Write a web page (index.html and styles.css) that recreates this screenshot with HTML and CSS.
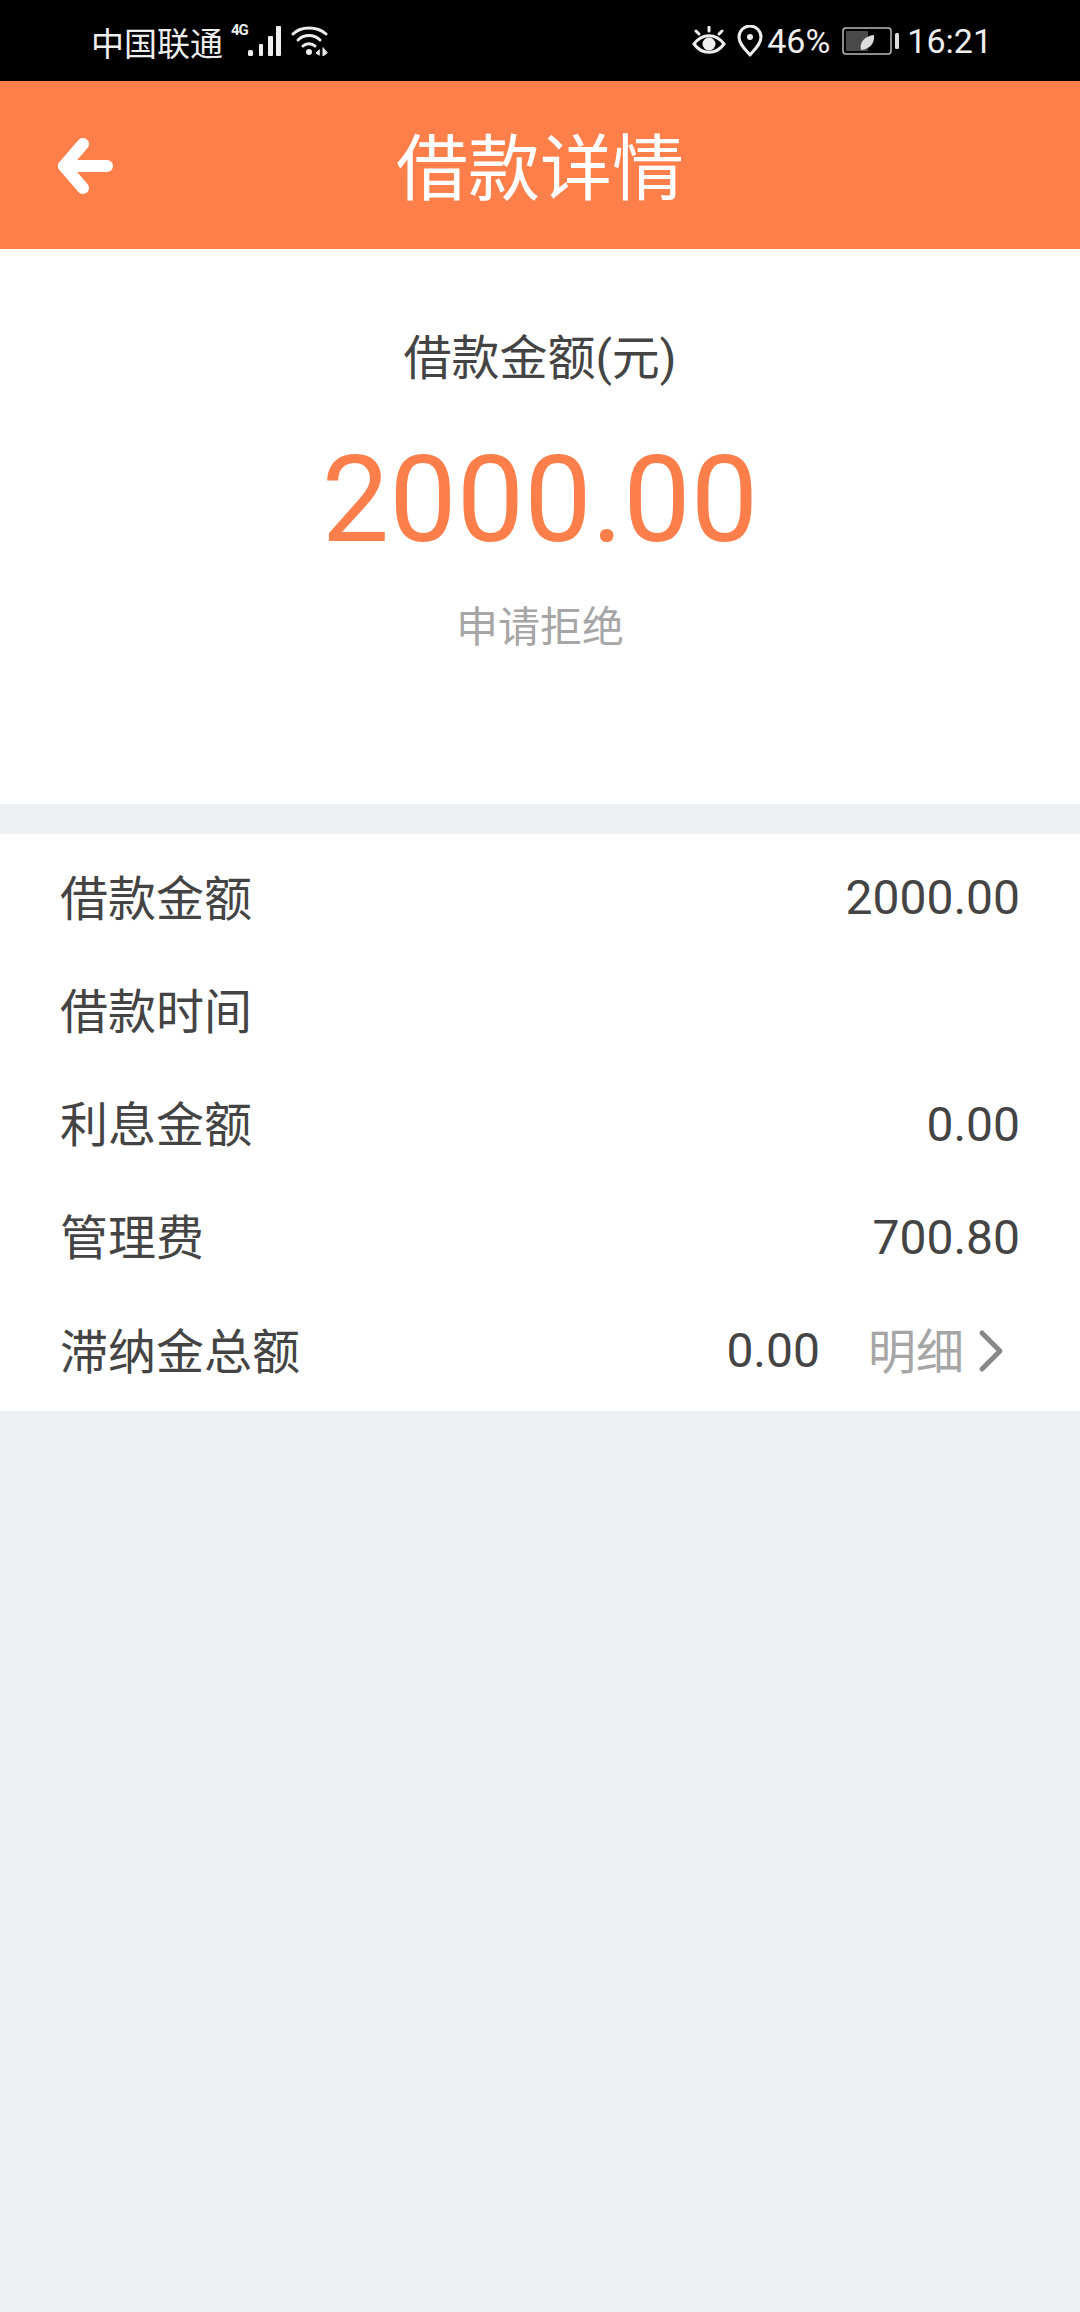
FILE: index.html
```html
<!DOCTYPE html>
<html lang="zh-CN">
<head>
<meta charset="UTF-8">
<meta name="viewport" content="width=device-width, initial-scale=1.0">
<title>借款详情</title>
<link rel="stylesheet" href="styles.css">
</head>
<body>
<div class="status-bar">
    <div class="status-left">
        <span class="carrier">中国联通</span>
        <span class="net">4G</span>
        <svg class="signal" width="34" height="30" viewBox="0 0 34 30">
            <rect x="0" y="24" width="5" height="6" rx="1.5" fill="#eee"/>
            <rect x="11" y="18" width="4" height="12" rx="1" fill="#eee"/>
            <rect x="20" y="10" width="5" height="20" rx="1" fill="#eee"/>
            <rect x="28" y="0" width="5" height="30" rx="1" fill="#eee"/>
        </svg>
        <svg class="wifi" width="38" height="30" viewBox="0 0 38 30" fill="none" stroke="#eee" stroke-width="3" stroke-linecap="round">
            <path d="M2 8C10 0 26 0 35 8"/>
            <path d="M7 14C13 8 23 8 29 14"/>
            <path d="M12 20C15 17 21 17 24 20"/>
            <circle cx="18" cy="26" r="3" fill="#eee" stroke="none"/>
            <path d="M28 24L25 27L28 29Z" fill="#eee" stroke-width="1"/>
            <path d="M32 22V30L36 27Z" fill="#eee" stroke-width="1"/>
        </svg>
    </div>
    <div class="status-right">
        <svg class="eye" width="34" height="30" viewBox="0 0 34 30" fill="none" stroke="#eee" stroke-width="3" stroke-linecap="round">
            <path d="M2 18C10 7 24 7 32 18C24 29 10 29 2 18Z"/>
            <circle cx="17" cy="18" r="6.5" fill="#eee" stroke="none"/>
            <path d="M17 1V5M4 5L7 8M30 5L27 8"/>
        </svg>
        <svg class="pin" width="26" height="32" viewBox="0 0 26 32" fill="none" stroke="#eee" stroke-width="3">
            <path d="M13 30C8 24 2 19 2 12A11 11 0 0 1 24 12C24 19 18 24 13 30Z" stroke-linejoin="round"/>
            <circle cx="13" cy="12" r="3" fill="#eee" stroke="none"/>
        </svg>
        <span class="percent">46%</span>
        <svg class="battery" width="58" height="28" viewBox="0 0 58 28">
            <rect x="1" y="1" width="48" height="26" rx="3" fill="none" stroke="#bbb" stroke-width="1.5"/>
            <rect x="4" y="4" width="22" height="20" rx="1" fill="#4a4a4a"/>
            <path d="M19 23C17 15 23 9 32 8C33 16 28 22 19 23Z" fill="#ddd"/>
            <rect x="53" y="6" width="4" height="16" rx="1.5" fill="#ddd"/>
        </svg>
        <span class="clock">16:21</span>
    </div>
</div>

<div class="header">
    <svg class="back" width="58" height="58" viewBox="0 0 58 58" fill="none" stroke="#fff" stroke-width="12" stroke-linecap="round" stroke-linejoin="round">
        <path d="M27 7L8 29L27 51"/>
        <path d="M8 29H51"/>
    </svg>
    <div class="header-title">借款详情</div>
</div>

<div class="hero">
    <div class="hero-label">借款金额(元)</div>
    <div class="hero-amount">2000.00</div>
    <div class="hero-status">申请拒绝</div>
</div>

<div class="detail-list">
    <div class="row"><span class="label">借款金额</span><span>2000.00</span></div>
    <div class="row"><span class="label">借款时间</span></div>
    <div class="row"><span class="label">利息金额</span><span>0.00</span></div>
    <div class="row"><span class="label">管理费</span><span>700.80</span></div>
    <div class="row">
        <span class="label">滞纳金总额</span>
        <div class="row-right">
            <span>0.00</span>
            <span class="link">明细</span>
            <svg class="chevron" width="28" height="44" viewBox="0 0 28 44" fill="none" stroke="#888" stroke-width="5" stroke-linecap="round" stroke-linejoin="round">
                <path d="M4 4L22 22L4 40"/>
            </svg>
        </div>
    </div>
</div>
</body>
</html>
```

FILE: styles.css
```css
body {
    margin: 0;
    padding: 0;
    height: 2312px;
    overflow: hidden;
    background-color: #edf1f4;
    font-family: Roboto, "Noto Sans CJK SC", sans-serif;
    color: #444;
}
.status-bar {
    height: 81px;
    box-sizing: border-box;
    background-color: #000;
    color: #eee;
    display: flex;
    justify-content: space-between;
    align-items: center;
    padding: 0 88px 0 91px;
}
.status-left,
.status-right {
    display: flex;
    align-items: center;
}
.carrier {
    font-size: 33px;
    margin-top: 2px;
}
.net {
    font-size: 15px;
    font-weight: 700;
    letter-spacing: -1px;
    margin: -22px 0 0 8px;
}
.signal {
    margin: 0 0 0 0;
}
.wifi {
    margin: 0 0 0 9px;
}
.pin {
    margin-left: 11px;
}
.percent {
    font-size: 34px;
    margin-left: 4px;
}
.battery {
    margin-left: 12px;
}
.clock {
    font-size: 34px;
    margin-left: 7px;
}
.header {
    height: 168px;
    box-sizing: border-box;
    padding-bottom: 6px;
    background-color: #ff7f4b;
    position: relative;
    display: flex;
    align-items: center;
    justify-content: center;
}
.back {
    position: absolute;
    left: 56px;
    top: 56px;
}
.header-title {
    color: #fff;
    font-size: 72px;
}
.hero {
    height: 555px;
    background-color: #fff;
    display: flex;
    flex-direction: column;
    align-items: center;
    box-sizing: border-box;
    padding-top: 85px;
}
.hero-label {
    font-size: 48px;
    line-height: 50px;
}
.hero-amount {
    font-size: 120px;
    line-height: 130px;
    color: #fc7f4b;
    margin-top: 51px;
}
.hero-status {
    font-size: 42px;
    line-height: 50px;
    color: #a6a6a6;
    margin-top: 38px;
}
.detail-list {
    margin-top: 30px;
    background-color: #fff;
    padding: 7px 60px 4px;
}
.row {
    height: 113.25px;
    display: flex;
    justify-content: space-between;
    align-items: center;
    font-size: 48px;
}
.label {
    margin-bottom: 6px;
}
.row-right {
    display: flex;
    align-items: center;
}
.link {
    color: #a6a6a6;
    margin: 0 0 6px 48px;
}
.chevron {
    margin: 0 14px 0 14px;
}
```
